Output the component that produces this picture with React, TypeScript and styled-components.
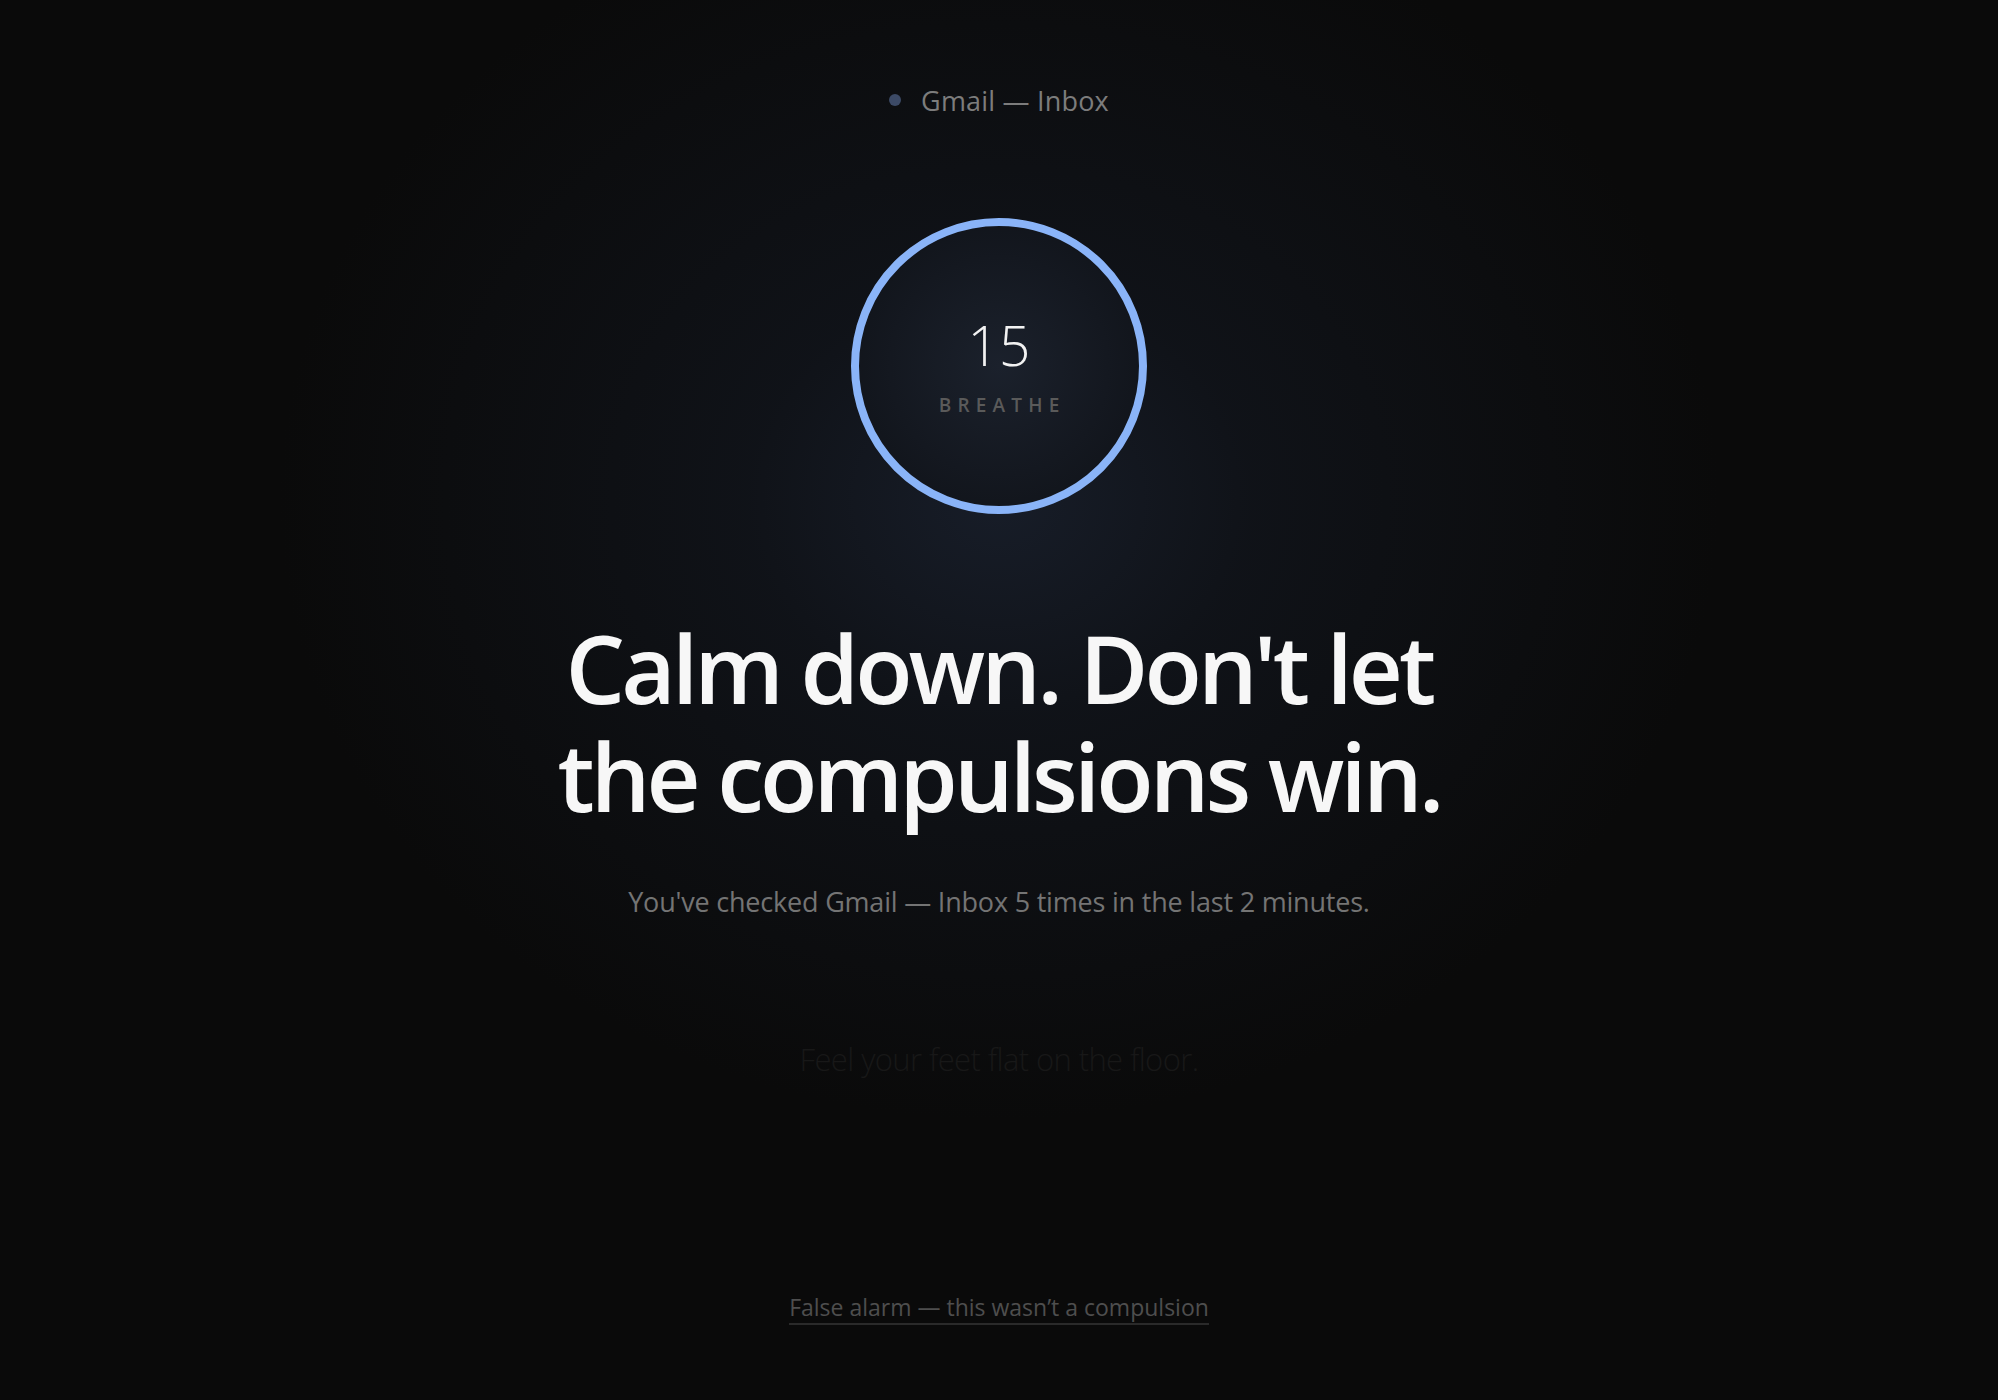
import React from "react";
import styled, { createGlobalStyle } from "styled-components";

const Global = createGlobalStyle`
  html, body { margin: 0; padding: 0; background: #0a0a0a; }
  body { font-family: "Open Sans", "Noto Sans", sans-serif; }
  * { box-sizing: border-box; }
`;

const Page = styled.main`
  width: 100%;
  height: 1400px;
  display: flex;
  flex-direction: column;
  align-items: center;
  background:
    radial-gradient(ellipse 720px 620px at 50% 500px, rgba(24, 30, 42, 0.95) 0%, rgba(18, 22, 30, 0.7) 35%, rgba(10, 10, 10, 0) 100%),
    #0a0a0a;
  overflow: hidden;
`;

const Source = styled.div`
  margin-top: 82px;
  display: flex;
  align-items: center;
  gap: 20px;
  font-size: 27px;
  line-height: 38px;
  color: #7c7c7c;
  letter-spacing: 0.2px;
`;

const Dot = styled.span`
  width: 12px;
  height: 12px;
  border-radius: 50%;
  background: #3c4a66;
  margin-top: -2px;
`;

const Ring = styled.div`
  margin-top: 98px;
  width: 296px;
  height: 296px;
  border-radius: 50%;
  border: 8px solid #8ab4f8;
  background: radial-gradient(circle at 50% 50%, #1b212c 0%, #141820 55%, #0e1116 100%);
  display: flex;
  flex-direction: column;
  align-items: center;
  justify-content: center;
`;

const Count = styled.div`
  font-size: 55px;
  font-weight: 300;
  line-height: 60px;
  color: #f2f2f2;
  margin-top: -2px;
`;

const Breathe = styled.div`
  margin-top: 19px;
  font-size: 19px;
  font-weight: 600;
  letter-spacing: 6.2px;
  margin-right: -6.2px;
  color: #5a5a5a;
  line-height: 22px;
`;

const Heading = styled.h1`
  margin: 100px 0 0;
  font-size: 94px;
  font-weight: 600;
  line-height: 108px;
  letter-spacing: -3.9px;
  color: #f7f7f7;
  text-align: center;
`;

const Sub = styled.p`
  margin: 54px 0 0;
  font-size: 27px;
  line-height: 36px;
  color: #747474;
  letter-spacing: -0.2px;
`;

const Prompt = styled.p`
  margin: 117px 0 0;
  font-size: 31px;
  font-weight: 300;
  line-height: 44px;
  color: #181818;
  letter-spacing: -0.6px;
`;

const FalseAlarm = styled.a`
  margin-top: 211px;
  font-size: 23px;
  line-height: 30px;
  color: #4e4e4e;
  text-decoration: none;
  border-bottom: 2px solid #2a2a2a;
  padding-bottom: 1px;
  cursor: pointer;
`;

export default function App() {
  return (
    <>
      <Global />
      <Page>
        <Source>
          <Dot />
          <span>Gmail — Inbox</span>
        </Source>
        <Ring>
          <Count>15</Count>
          <Breathe>BREATHE</Breathe>
        </Ring>
        <Heading>
          Calm down. Don't let
          <br />
          the compulsions win.
        </Heading>
        <Sub>You've checked Gmail — Inbox 5 times in the last 2 minutes.</Sub>
        <Prompt>Feel your feet flat on the floor.</Prompt>
        <FalseAlarm>False alarm — this wasn’t a compulsion</FalseAlarm>
      </Page>
    </>
  );
}
